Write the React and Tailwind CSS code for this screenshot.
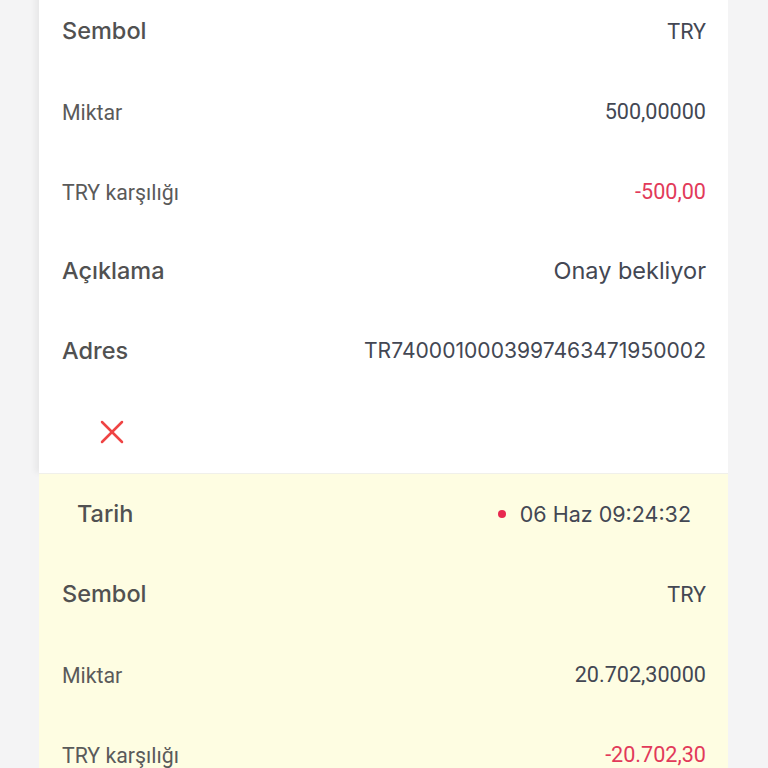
import { X } from "lucide-react";

const poppins = { fontFamily: "Inter, 'Noto Sans', sans-serif" };
const roboto = { fontFamily: "Roboto, 'Liberation Sans', sans-serif" };

const Row = ({ label, value, labelFont = "poppins", valueFont = "roboto", red, valueSize }) => (
  <div className="flex h-[80px] items-center justify-between pl-[23px] pr-[22px]">
    <span
      style={labelFont === "poppins" ? poppins : roboto}
      className={
        labelFont === "poppins"
          ? "text-[23.5px] font-medium text-[#515151]"
          : "text-[21.3px] text-[#5a5a5a] pt-[3px]"
      }
    >
      {label}
    </span>
    <span
      style={valueFont === "poppins" ? poppins : roboto}
      className={
        (valueSize || "text-[21.6px] pt-[2px]") +
        (red ? " text-[#e23a5a]" : " text-[#434753]")
      }
    >
      {value}
    </span>
  </div>
);

export default function App() {
  return (
    <div className="h-[768px] overflow-hidden bg-[#f4f4f5] pl-[39px] pr-[40px]">
      <div className="mt-[-9px] bg-white shadow-[-4px_0_6px_rgba(0,0,0,0.05)]">
        <Row label="Sembol" value="TRY" />
        <Row label="Miktar" value="500,00000" labelFont="roboto" />
        <Row label="TRY karşılığı" value="-500,00" labelFont="roboto" red />
        <Row label="Açıklama" value="Onay bekliyor" valueFont="poppins" valueSize="text-[23.5px]" />
        <Row
          label="Adres"
          value="TR7400010003997463471950002"
          valueFont="poppins"
          valueSize="text-[21.1px]"
        />
        <div className="flex h-[82px] items-center pl-[53px]">
          <X className="h-[40px] w-[40px] text-[#ef4444]" strokeWidth={1.5} />
        </div>
      </div>
      <div className="border-t border-[#f0f0ea] bg-[#fefde2]">
        <div className="flex h-[80px] items-center justify-between pl-[38px] pr-[37px]">
          <span style={poppins} className="text-[23.5px] font-medium text-[#515151]">
            Tarih
          </span>
          <span
            style={poppins}
            className="flex items-center gap-[14px] text-[21.5px] text-[#434753]"
          >
            <span className="h-[8px] w-[8px] rounded-full bg-[#e8294f]" />
            06 Haz 09:24:32
          </span>
        </div>
        <Row label="Sembol" value="TRY" />
        <Row label="Miktar" value="20.702,30000" labelFont="roboto" />
        <Row label="TRY karşılığı" value="-20.702,30" labelFont="roboto" red />
      </div>
    </div>
  );
}
